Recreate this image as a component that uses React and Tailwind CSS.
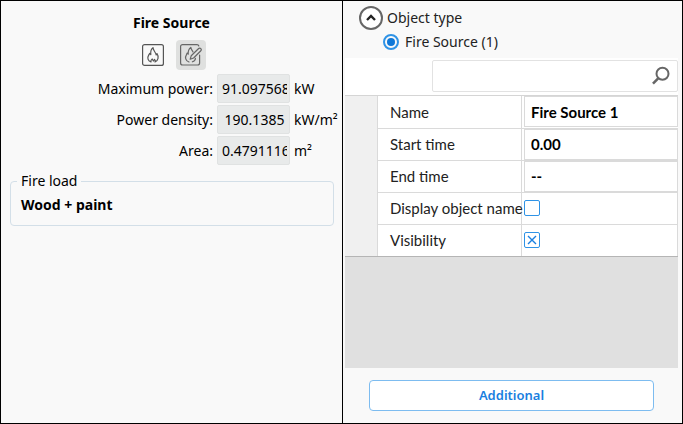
import React, { useState } from 'react';

const powerFields = [
  { id: 'max-power', label: 'Maximum power:', value: '91.0975685', unit: 'kW' },
  { id: 'power-density', label: 'Power density:', value: '190.1385', unit: 'kW/m²' },
  { id: 'area', label: 'Area:', value: '0.47911163', unit: 'm²' },
];

const textRows = [
  { id: 'name', label: 'Name', value: 'Fire Source 1' },
  { id: 'start-time', label: 'Start time', value: '0.00' },
  { id: 'end-time', label: 'End time', value: '--' },
];

const FlameIcon = () => (
  <svg width="22" height="22" viewBox="0 0 22 22" fill="none" stroke="#555" strokeWidth="1.2" strokeLinejoin="round">
    <rect x="0.6" y="0.6" width="20.8" height="20.8" rx="2" />
    <path d="M9 18C5.8 16.8 5 13.8 6.7 11.2C7 10.6 7.4 10.2 7.6 9.4L8.8 10.6C8.4 7.4 9.2 5 11 3.6C11 6.6 13.8 8 14.2 11L15 9.6C17 12.6 16.4 16.6 13 18C13.6 16.8 13.4 16 12.6 15.4L11.4 17L10.2 15C9 15.8 8.6 16.8 9 18Z" />
  </svg>
);

const FlameEditIcon = () => (
  <svg width="22" height="22" viewBox="0 0 22 22" fill="none" stroke="#666" strokeWidth="1.2" strokeLinejoin="round" strokeLinecap="round">
    <path d="M18.8 2C18.6 1.2 18 0.6 17 0.6H2.6C1.4 0.6 0.6 1.4 0.6 2.6V19C0.6 20.2 1.4 21 2.6 21H17.6C18.8 21 19.6 20.2 19.6 19V11" />
    <path d="M9 18C5.4 16.8 4.8 13.2 6.4 10.8L7.2 9L8.2 10.2C8 7 9 4.8 10.8 3.4C11 5.6 12.4 6.4 13 8" />
    <path d="M10.2 15.2L11.2 11.8L18.4 4.8C19.2 4 20.2 4 20.8 4.6C21.4 5.2 21.4 6.2 20.6 7L13.6 14Z" />
    <path d="M12.4 17.8C14.6 17 15.4 15.8 15.4 14.4" />
  </svg>
);

const SearchIcon = () => (
  <svg width="20" height="20" viewBox="0 0 20 20" fill="none" stroke="#666" strokeWidth="2">
    <circle cx="11.5" cy="7.8" r="6" />
    <path d="M7.4 12.2L2 17.6" strokeWidth="2.6" />
  </svg>
);

const GridCheckbox = ({ id, defaultChecked }) => (
  <span className="relative flex h-4 w-4">
    <input
      id={id}
      type="checkbox"
      defaultChecked={defaultChecked}
      className="peer h-4 w-4 appearance-none rounded-xs border border-[#2f93e6] bg-white"
    />
    <svg viewBox="0 0 16 16" className="pointer-events-none absolute inset-0 hidden h-4 w-4 peer-checked:block" stroke="#1a7fe0" strokeWidth="1.4">
      <path d="M4 4L12 12M12 4L4 12" />
    </svg>
  </span>
);

const SourcePanel = () => {
  const [mode, setMode] = useState('edit');

  return (
    <section className="flex min-w-0 flex-col border-r border-black bg-[#f9f9f9] font-['Noto_Sans','Open_Sans',sans-serif] text-sm text-black">
      <h1 className="mt-3 text-center leading-5 font-bold">Fire Source</h1>

      <div className="mt-[7px] flex justify-center gap-2">
        <button
          type="button"
          aria-label="Fire"
          onClick={() => setMode('fire')}
          className={`flex h-[30px] w-[30px] items-center justify-center rounded ${mode === 'fire' ? 'bg-[#dfe0df]' : ''}`}
        >
          <FlameIcon />
        </button>
        <button
          type="button"
          aria-label="Edit fire"
          onClick={() => setMode('edit')}
          className={`flex h-[30px] w-[30px] items-center justify-center rounded ${mode === 'edit' ? 'bg-[#dfe0df]' : ''}`}
        >
          <FlameEditIcon />
        </button>
      </div>

      <div className="mt-1 flex flex-col gap-0.5 pr-1">
        {powerFields.map((field) => (
          <div key={field.id} className="grid grid-cols-[1fr_73px_44px] items-center gap-1">
            <label htmlFor={field.id} className="text-right">{field.label}</label>
            <input
              id={field.id}
              readOnly
              defaultValue={field.value}
              className="h-[29px] w-full rounded-xs border border-[#e0e2e2] bg-[#e8eaea] pr-0.5 pl-1 text-center"
            />
            <span className="overflow-hidden whitespace-nowrap">{field.unit}</span>
          </div>
        ))}
      </div>

      <fieldset className="mr-2 ml-[9px] mt-1.5 rounded border border-[#d3dfe8] px-2.5 pt-1 pb-2.5">
        <legend className="-ml-1 px-1 leading-5">Fire load</legend>
        <p className="leading-5 font-bold">Wood + paint</p>
      </fieldset>
    </section>
  );
};

const PropertiesPanel = () => (
  <section className="flex min-w-0 flex-col bg-[#f9f9f9] pr-1 pl-0.5 text-[#222]">
    <div className="flex flex-col pt-[5px] pl-3.5 font-['Noto_Sans','Open_Sans',sans-serif] text-sm leading-6">
      <div className="flex h-6 items-center gap-1">
        <button type="button" aria-label="Collapse object type" className="flex h-6 w-6 items-center justify-center rounded-full border-2 border-[#666] bg-white">
          <svg width="12" height="12" viewBox="0 0 12 12" fill="none" stroke="#222" strokeWidth="2.4">
            <path d="M2 8L6 4L10 8" />
          </svg>
        </button>
        <span>Object type</span>
      </div>
      <label className="flex h-6 items-center gap-1.5 pl-6">
        <input
          type="radio"
          name="object-type"
          defaultChecked
          className="h-4 w-4 appearance-none rounded-full border-2 border-[#2f93e6] bg-white checked:bg-[#0f78d8] checked:bg-clip-content checked:p-0.5"
        />
        Fire Source (1)
      </label>
    </div>

    <div className="mt-1 flex bg-white pt-0.5 pb-[3px]">
      <div className="ml-[87px] flex h-8 flex-1 items-center rounded-xs border border-[#e2e2e2] pr-1.5">
        <input type="search" aria-label="Search properties" className="h-full min-w-0 flex-1 px-2 text-sm outline-none" />
        <button type="button" aria-label="Search">
          <SearchIcon />
        </button>
      </div>
    </div>

    <div className="flex border-t border-b border-t-[#d5d5d5] border-b-[#b5b5b5] bg-[#f0f0f0] pl-8 font-['Lato',sans-serif] text-[15px] text-[#222]">
      <table className="w-full table-fixed border-collapse bg-white">
        <colgroup>
          <col className="w-36" />
          <col />
        </colgroup>
        <tbody>
          {textRows.map((row) => (
            <tr key={row.id} className="h-8 border-b border-[#dadada]">
              <th scope="row" className="border-x border-[#dadada] p-0 pl-3 text-left font-normal whitespace-nowrap">
                <label htmlFor={row.id}>{row.label}</label>
              </th>
              <td className="p-0 pl-0.5">
                <input
                  id={row.id}
                  defaultValue={row.value}
                  className="block h-[31px] w-full border border-[#dadada] px-1.5 font-bold text-black"
                />
              </td>
            </tr>
          ))}
          <tr className="h-8 border-b border-[#dadada]">
            <th scope="row" className="border-x border-[#dadada] p-0 pl-3 text-left font-normal whitespace-nowrap">
              <label htmlFor="display-name">Display object name</label>
            </th>
            <td className="border-r border-[#dadada] p-0 pl-0.5"><GridCheckbox id="display-name" /></td>
          </tr>
          <tr className="h-8">
            <th scope="row" className="border-x border-[#dadada] p-0 pl-3 text-left font-normal whitespace-nowrap">
              <label htmlFor="visibility">Visibility</label>
            </th>
            <td className="border-r border-[#dadada] p-0 pl-0.5"><GridCheckbox id="visibility" defaultChecked /></td>
          </tr>
        </tbody>
      </table>
    </div>

    <div className="min-h-16 flex-1 bg-[#e0e0e0]" />

    <div className="px-6 py-3">
      <button
        type="button"
        className="h-[31px] w-full rounded border border-[#7dbcf0] bg-white font-['Noto_Sans','Open_Sans',sans-serif] text-[13px] font-semibold text-[#1a7fe0]"
      >
        Additional
      </button>
    </div>
  </section>
);

const App = () => (
  <main className="grid min-h-screen grid-cols-[342fr_339fr] border border-black">
    <SourcePanel />
    <PropertiesPanel />
  </main>
);

export default App;
